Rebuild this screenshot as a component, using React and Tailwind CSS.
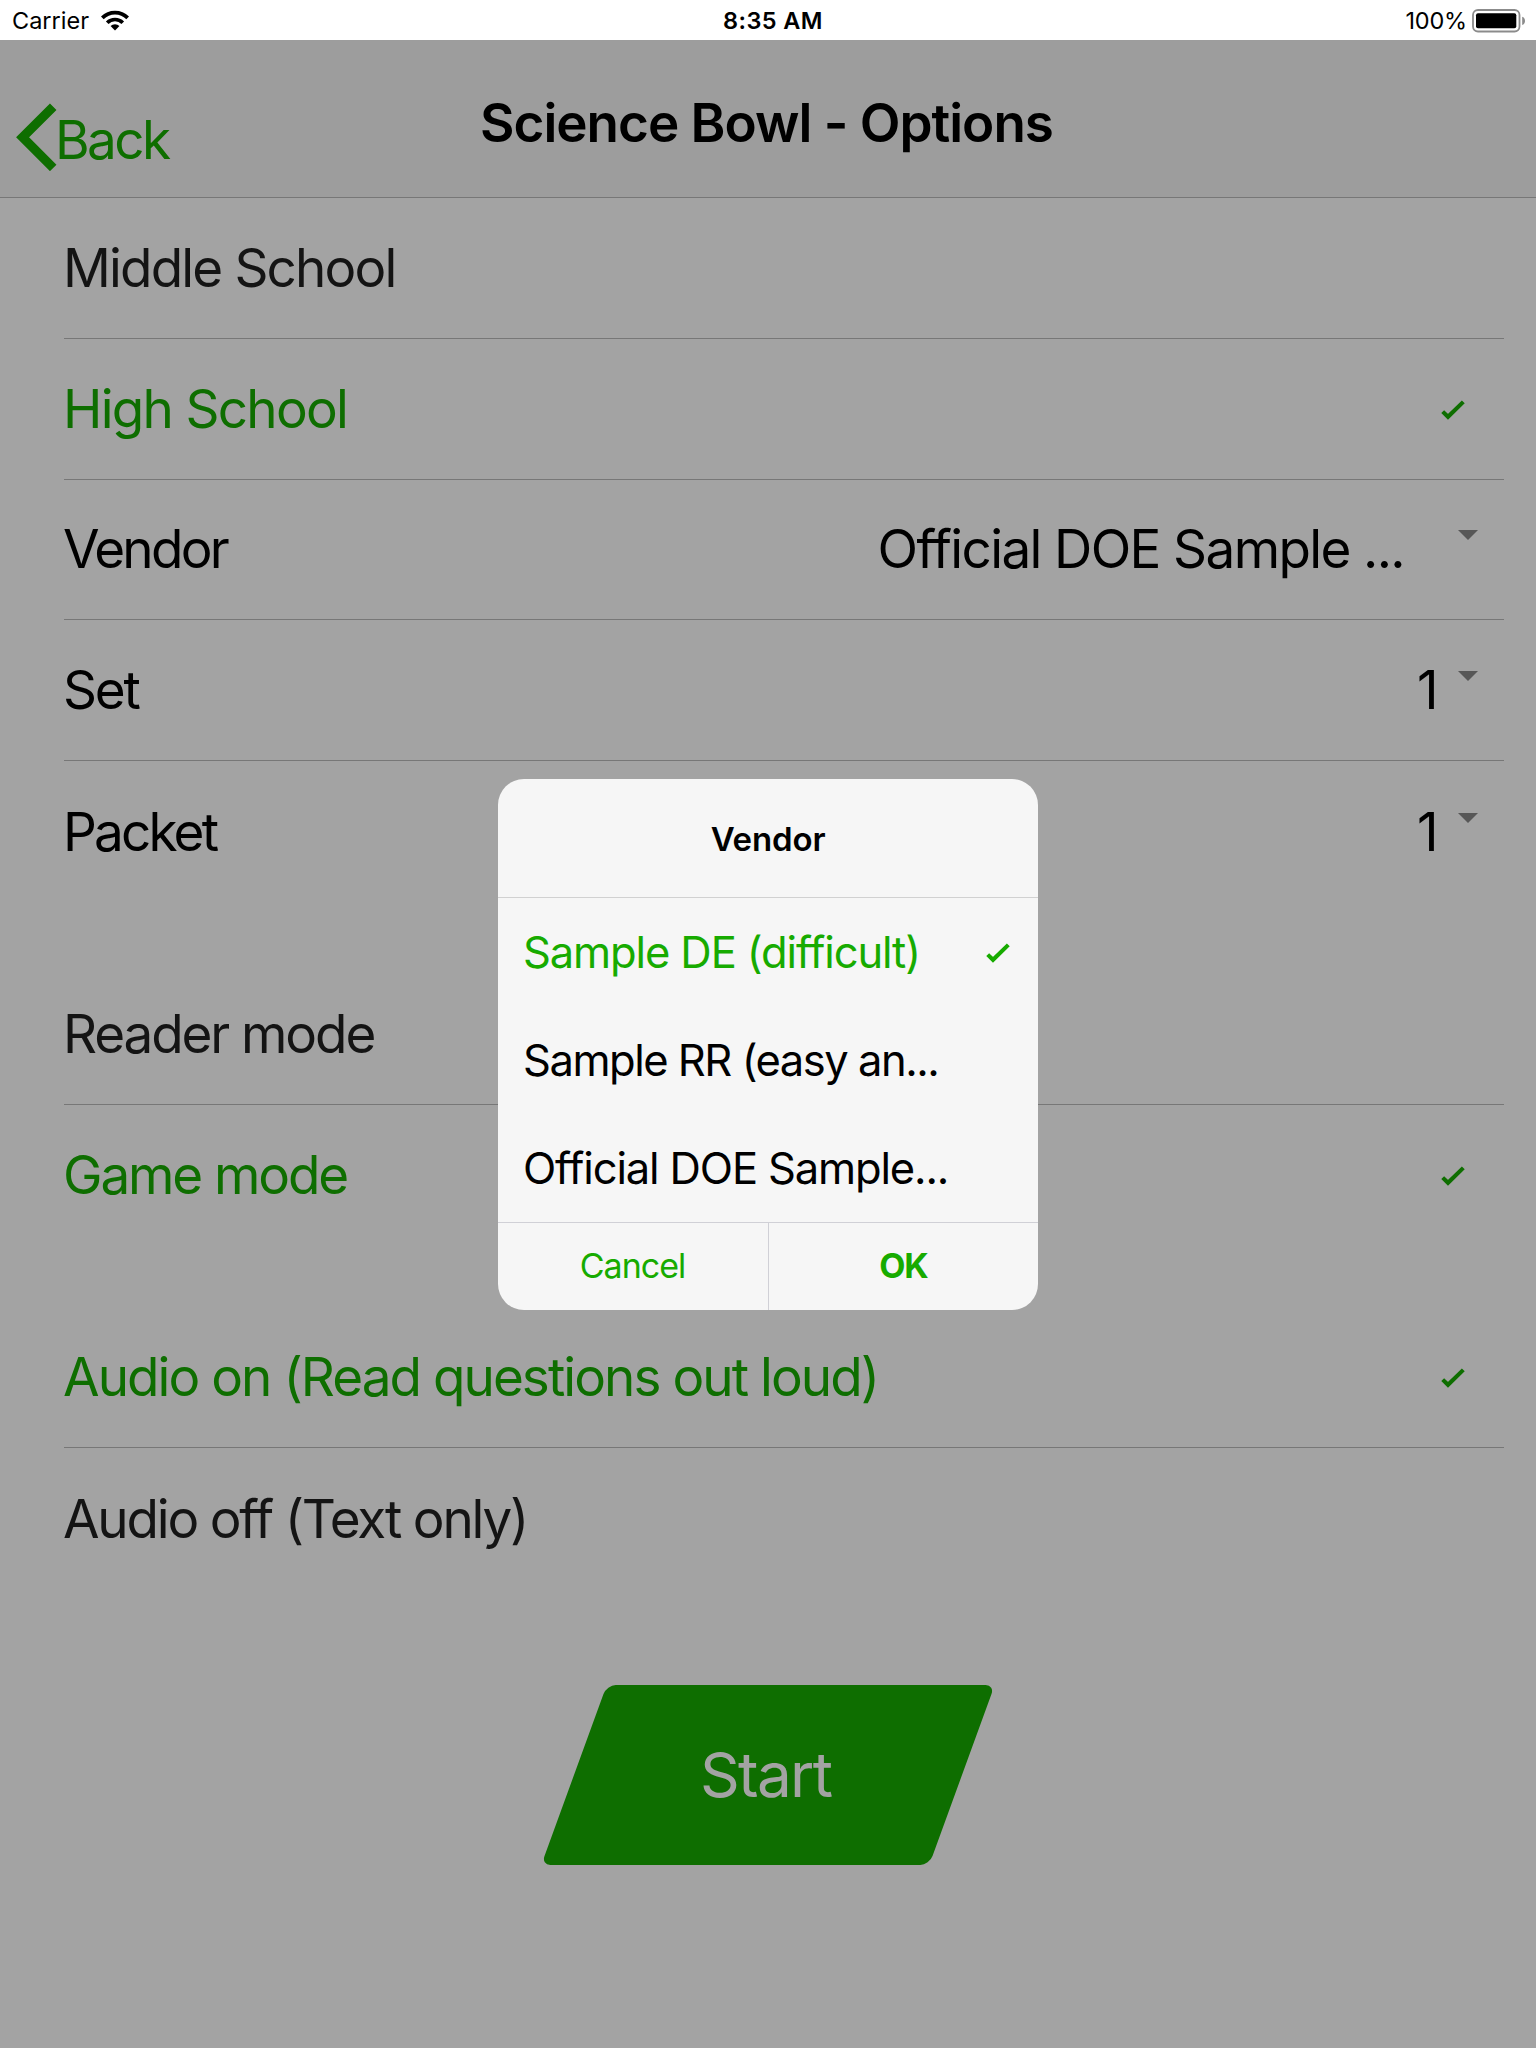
import React from "react";

function CheckIcon({ className }) {
  return (
    <svg className={className} width="26" height="20" viewBox="0 0 26 20" fill="none" stroke="currentColor">
      <path d="M1.7 11.6 7 16.8 22.3 1.9" strokeWidth="4.1" />
    </svg>
  );
}

function StatusBar() {
  return (
    <div className="grid h-10 grid-cols-3 items-center bg-white pr-[10px] pl-3 text-[23.5px] leading-none text-black">
      <div className="flex items-center gap-3">
        <span className="pt-px">Carrier</span>
        <svg width="28" height="21" viewBox="0 0 28 21" fill="none" stroke="#000">
          <path d="M1.34 7.84a17.9 17.9 0 0 1 25.32 0" strokeWidth="3.8" />
          <path d="M6.22 12.72a11 11 0 0 1 15.56 0" strokeWidth="3.7" />
          <path d="M14 20.5 9.55 16.05a6.3 6.3 0 0 1 8.9 0Z" fill="#000" stroke="none" />
        </svg>
      </div>
      <div className="pt-px pl-2 text-center font-semibold tracking-[0.4px]">8:35 AM</div>
      <div className="flex items-center justify-end gap-[5px]">
        <span className="pt-px tracking-[-0.2px]">100%</span>
        <svg className="mt-px" width="54" height="24" viewBox="0 0 54 24">
          <rect x="1" y="1" width="46.5" height="21.5" rx="5" fill="none" stroke="#8b8b8b" strokeWidth="1.8" />
          <rect x="4" y="4.2" width="40.3" height="15.1" rx="2" fill="#000" />
          <path d="M50.2 7.8c1.8.5 2.8 2.2 2.8 4.1s-1 3.6-2.8 4.1Z" fill="#8b8b8b" />
        </svg>
      </div>
    </div>
  );
}

function Header() {
  return (
    <header className="grid h-[158px] grid-cols-[300px_1fr_300px] border-b border-[#777777] bg-[#9d9d9d]">
      <div className="flex items-start pt-[63px] pl-4 text-[#0e6e00]">
        <svg width="41" height="68" viewBox="0 0 41 68" fill="none" stroke="currentColor">
          <path d="M37.2 3.7 6.6 34.3 37.2 64.9" strokeWidth="9.2" />
        </svg>
        <span className="mt-[5px] -ml-[2px] text-[53px] leading-[64px] tracking-[-2.6px]">Back</span>
      </div>
      <h1 className="pt-[51px] pr-[3px] text-center text-[53px] leading-[64px] font-semibold tracking-[-1px] text-black">
        Science Bowl - Options
      </h1>
    </header>
  );
}

function Row({ label, tracking, color, last, height = "h-[141px]", children }) {
  return (
    <div className={`mr-8 ml-16 flex border-b ${height} ${last ? "border-transparent" : "border-[#777777]"} ${color}`}>
      <span className={`-ml-px flex-1 self-center whitespace-nowrap text-[53px] leading-[64px] ${tracking}`}>{label}</span>
      {children}
    </div>
  );
}

function Checked() {
  return <CheckIcon className="mt-[2px] mr-[37px] self-center" />;
}

function Picker({ value, valueClass, arrowClass }) {
  return (
    <>
      <span className={`self-center whitespace-nowrap text-[53px] leading-[64px] ${valueClass}`}>{value}</span>
      <svg className={`mr-[26px] ${arrowClass}`} width="20" height="10" viewBox="0 0 20 10">
        <path d="M0 0h20L10 10Z" fill="#575757" />
      </svg>
    </>
  );
}

function Option({ label, tracking, checked }) {
  return (
    <div className={`flex h-[108px] items-center justify-between pr-[26px] pl-[25px] ${checked ? "text-[#17ab00]" : "text-black"}`}>
      <span className={`pt-[2px] whitespace-nowrap text-[43.5px] leading-none ${tracking}`}>{label}</span>
      {checked && <CheckIcon className="mt-[2px]" />}
    </div>
  );
}

function VendorDialog() {
  return (
    <div className="absolute inset-x-0 top-[779px] flex justify-center">
      <div role="dialog" className="w-[540px] overflow-hidden rounded-[26px] bg-[#f6f6f6]">
        <h2 className="flex h-[119px] items-center justify-center border-b border-[#d1d1d1] pt-[2px] text-[33px] leading-none font-semibold tracking-[-0.15px] text-black">
          Vendor
        </h2>
        <Option label="Sample DE (difficult)" tracking="tracking-[-1.12px]" checked />
        <Option label="Sample RR (easy an..." tracking="tracking-[-1.48px]" />
        <Option label="Official DOE Sample..." tracking="tracking-[-1.15px]" />
        <div className="flex h-[88px] border-t border-[#d0d0d6] pb-[2px] text-[34px] leading-none text-[#17ab00]">
          <button className="-mb-[2px] w-[271px] border-r border-[#d0d0d6] pr-px pb-[2px] tracking-[-1px]">Cancel</button>
          <button className="flex-1 font-bold tracking-[-1px]">OK</button>
        </div>
      </div>
    </div>
  );
}

export default function App() {
  return (
    <div className="relative h-[2048px] w-[1536px] overflow-hidden bg-[#a3a3a3] font-['Inter','Liberation_Sans',sans-serif]">
      <StatusBar />
      <Header />
      <section>
        <Row label="Middle School" tracking="tracking-[-1.83px]" color="text-[#141414]" />
        <Row label="High School" tracking="tracking-[-1.71px]" color="text-[#0e6e00]">
          <Checked />
        </Row>
        <Row label="Vendor" tracking="tracking-[-2.7px]" color="text-black" height="h-[140px] pb-px">
          <Picker value="Official DOE Sample ..." valueClass="mr-[54px] tracking-[-1.62px]" arrowClass="mt-[50px]" />
        </Row>
        <Row label="Set" tracking="tracking-[-2.2px]" color="text-black">
          <Picker value="1" valueClass="mr-[19.5px]" arrowClass="mt-[51px]" />
        </Row>
        <Row label="Packet" tracking="tracking-[-2.8px]" color="text-black" height="h-[143px]" last>
          <Picker value="1" valueClass="mr-[19.5px]" arrowClass="mt-[52px]" />
        </Row>
      </section>
      <section className="mt-[60px]">
        <Row label="Reader mode" tracking="tracking-[-2.1px]" color="text-[#141414]" />
        <Row label="Game mode" tracking="tracking-[-2.12px]" color="text-[#0e6e00]" last>
          <Checked />
        </Row>
      </section>
      <section className="mt-[61px]">
        <Row label="Audio on (Read questions out loud)" tracking="tracking-[-1.94px]" color="text-[#0e6e00]">
          <Checked />
        </Row>
        <Row label="Audio off (Text only)" tracking="tracking-[-2.2px]" color="text-[#141414]" height="h-[143px]" last />
      </section>
      <div className="mt-[94px] flex justify-center">
        <button className="h-[180px] w-[388px] -skew-x-[20deg] rounded-[9px] bg-[#0e6e00]">
          <span className="mr-1 inline-block skew-x-[20deg] text-[62px] leading-none tracking-[-1.7px] text-[#a3a3a3]">Start</span>
        </button>
      </div>
      <VendorDialog />
    </div>
  );
}
